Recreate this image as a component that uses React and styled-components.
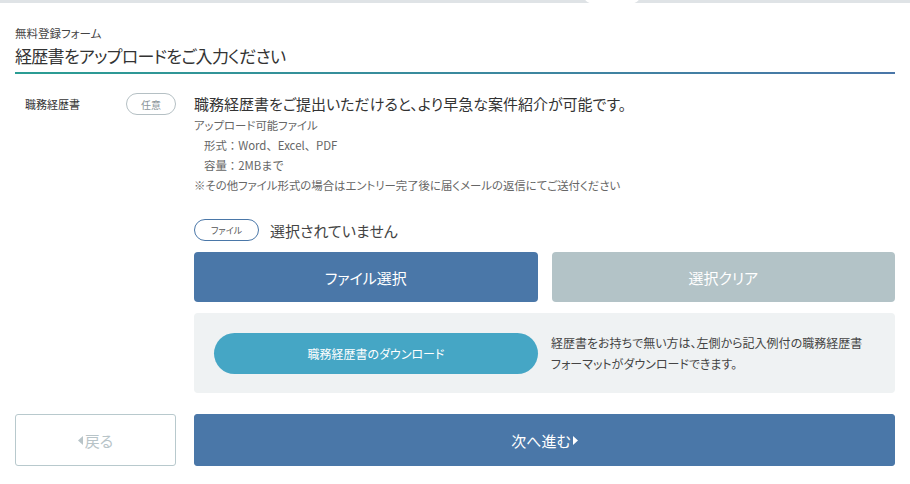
import React from "react";
import styled, { createGlobalStyle } from "styled-components";

const GlobalStyle = createGlobalStyle`
  body {
    margin: 0;
    background: #fff;
    font-family: "Noto Sans CJK JP", "Noto Sans", sans-serif;
    color: #333;
  }
`;

const Page = styled.div`
  width: 910px;
  height: 484px;
  overflow: hidden;
  font-feature-settings: "palt";
`;

const TopBar = styled.div`
  position: relative;
  height: 3px;
  background: #dfe3e6;
`;

const Notch = styled.div`
  position: absolute;
  left: 585px;
  top: -8px;
  width: 54px;
  height: 14px;
  border-radius: 50%;
  background: #fff;
`;

const Content = styled.div`
  padding: 0 15px;
`;

const Header = styled.div`
  padding-top: 22px;
  border-bottom: 2px solid transparent;
  border-image: linear-gradient(90deg, #2a9d93, #4a76a8) 1;
  padding-bottom: 1px;
`;

const Eyebrow = styled.div`
  font-size: 11.5px;
  line-height: 16px;
  color: #444;
`;

const Title = styled.h1`
  margin: 0;
  font-size: 17px;
  font-weight: 400;
  letter-spacing: -0.7px;
  line-height: 30px;
  color: #333;
`;

const Row = styled.div`
  display: grid;
  grid-template-columns: 179px 1fr;
  padding-top: 19px;
`;

const LabelCell = styled.div`
  display: flex;
  align-items: flex-start;
  justify-content: space-between;
  padding-left: 10px;
  padding-right: 18px;
`;

const Label = styled.span`
  font-size: 11px;
  line-height: 22px;
  color: #333;
`;

const Pill = styled.span`
  display: inline-flex;
  align-items: center;
  justify-content: center;
  box-sizing: border-box;
  width: ${({ w }) => w}px;
  height: 22px;
  border: 1px solid ${({ c }) => c};
  border-radius: 11px;
  font-size: ${({ fs }) => fs || 10}px;
  color: ${({ t }) => t};
`;

const Field = styled.div`
  display: flex;
  flex-direction: column;
`;

const Lead = styled.p`
  margin: 0;
  font-size: 15px;
  line-height: 22px;
  color: #333;
`;

const Note = styled.p`
  margin: 0;
  font-size: 11.4px;
  line-height: 20px;
  color: #666;
  padding-left: ${({ indent }) => (indent ? "10px" : "0")};
  font-feature-settings: ${({ plain }) => (plain ? "normal" : "'palt'")};
`;

const FileRow = styled.div`
  display: flex;
  align-items: center;
  gap: 11px;
  margin-top: 24px;
`;

const FileState = styled.span`
  font-size: 15px;
  color: #444;
`;

const ButtonRow = styled.div`
  display: grid;
  grid-template-columns: 1fr 1fr;
  gap: 14px;
  margin-top: 11px;
`;

const Button = styled.button`
  height: 50px;
  border: none;
  border-radius: 4px;
  background: ${({ bg }) => bg};
  color: #fff;
  font-family: inherit;
  font-feature-settings: "palt";
  font-size: 15px;
  padding: 0;
`;

const DownloadBox = styled.div`
  display: flex;
  align-items: center;
  gap: 13px;
  margin-top: 11px;
  height: 80px;
  padding: 0 20px;
  background: #eff2f3;
  border-radius: 4px;
`;

const DownloadButton = styled.button`
  flex: 0 0 324px;
  height: 41px;
  border: none;
  border-radius: 21px;
  background: #45a6c5;
  color: #fff;
  font-family: inherit;
  font-feature-settings: "palt";
  font-size: 12px;
`;

const DownloadText = styled.p`
  margin: 0;
  font-size: 12px;
  line-height: 21px;
  color: #444;
`;

const Footer = styled.div`
  display: grid;
  grid-template-columns: 161px 1fr;
  gap: 18px;
  margin-top: 21px;
`;

const NavButton = styled.button`
  display: flex;
  align-items: center;
  justify-content: center;
  gap: 2px;
  height: 52px;
  box-sizing: border-box;
  border: 1px solid ${({ ghost }) => (ghost ? "#b8c9cd" : "#4a77a8")};
  border-radius: 3px;
  background: ${({ ghost }) => (ghost ? "#fff" : "#4a77a8")};
  color: ${({ ghost }) => (ghost ? "#b8c4c8" : "#fff")};
  font-family: inherit;
  font-feature-settings: "palt";
  font-size: 15px;
  padding: 0;
`;

const Caret = ({ dir }) => (
  <svg width="5" height="9" viewBox="0 0 5 9">
    {dir === "left" ? (
      <path d="M5 0 L0 4.5 L5 9 Z" fill="currentColor" />
    ) : (
      <path d="M0 0 L5 4.5 L0 9 Z" fill="currentColor" />
    )}
  </svg>
);

export default function App() {
  return (
    <Page>
      <GlobalStyle />
      <TopBar>
        <Notch />
      </TopBar>
      <Content>
        <Header>
          <Eyebrow>無料登録フォーム</Eyebrow>
          <Title>経歴書をアップロードをご入力ください</Title>
        </Header>
        <Row>
          <LabelCell>
            <Label>職務経歴書</Label>
            <Pill w={50} c="#b5c0c4" t="#8a9498">
              任意
            </Pill>
          </LabelCell>
          <Field>
            <Lead>
              職務経歴書をご提出いただけると、より早急な案件紹介が可能です。
            </Lead>
            <Note>アップロード可能ファイル</Note>
            <Note indent plain>
              形式：Word、Excel、PDF
            </Note>
            <Note indent plain>
              容量：2MBまで
            </Note>
            <Note>
              ※その他ファイル形式の場合はエントリー完了後に届くメールの返信にてご送付ください
            </Note>
            <FileRow>
              <Pill w={65} c="#4a77a8" t="#555" fs={9}>
                ファイル
              </Pill>
              <FileState>選択されていません</FileState>
            </FileRow>
            <ButtonRow>
              <Button bg="#4a77a8">ファイル選択</Button>
              <Button bg="#b3c3c7">選択クリア</Button>
            </ButtonRow>
            <DownloadBox>
              <DownloadButton>職務経歴書のダウンロード</DownloadButton>
              <DownloadText>
                経歴書をお持ちで無い方は、左側から記入例付の職務経歴書
                <br />
                フォーマットがダウンロードできます。
              </DownloadText>
            </DownloadBox>
          </Field>
        </Row>
        <Footer>
          <NavButton ghost>
            <Caret dir="left" />
            戻る
          </NavButton>
          <NavButton>
            次へ進む
            <Caret dir="right" />
          </NavButton>
        </Footer>
      </Content>
    </Page>
  );
}
